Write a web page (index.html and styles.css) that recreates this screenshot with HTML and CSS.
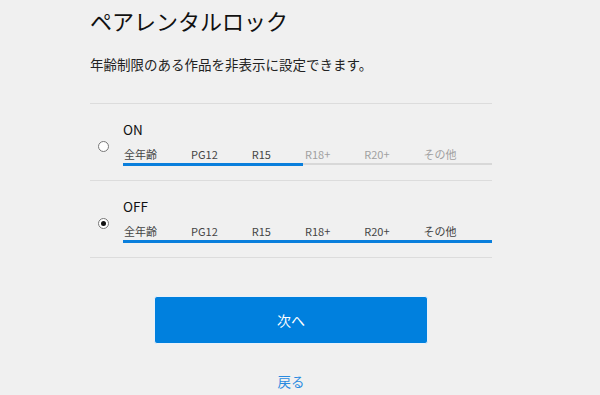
FILE: index.html
```html
<!DOCTYPE html>
<html lang="ja">
<head>
<meta charset="utf-8">
<title>ペアレンタルロック</title>
<link rel="stylesheet" href="styles.css">
</head>
<body>
<main class="page">
  <h1 class="title">ペアレンタルロック</h1>
  <p class="lead">年齢制限のある作品を非表示に設定できます。</p>
  <div class="options">
    <div class="option">
      <span class="radio"></span>
      <div class="body">
        <div class="name">ON</div>
        <div class="ratings">
          <span class="on">全年齢</span><span class="on">PG12</span><span class="on">R15</span><span>R18+</span><span>R20+</span><span>その他</span>
        </div>
        <div class="track"><div class="fill" style="width:180px"></div></div>
      </div>
    </div>
    <div class="option">
      <span class="radio checked"></span>
      <div class="body">
        <div class="name">OFF</div>
        <div class="ratings">
          <span class="on">全年齢</span><span class="on">PG12</span><span class="on">R15</span><span class="on">R18+</span><span class="on">R20+</span><span class="on">その他</span>
        </div>
        <div class="track"><div class="fill" style="width:100%"></div></div>
      </div>
    </div>
  </div>
  <div class="actions">
    <button class="next">次へ</button>
    <a class="back" href="#">戻る</a>
  </div>
</main>
</body>
</html>
```
FILE: styles.css
```css
html, body {
  margin: 0;
  padding: 0;
  background: #f0f0f0;
}
body {
  font-family: "Noto Sans CJK JP", "Noto Sans", sans-serif;
  color: #222;
}
.page {
  width: 402px;
  margin-left: 90px;
  padding-top: 4px;
}
.title {
  margin: 0;
  font-size: 22px;
  font-weight: 400;
  line-height: 32px;
  color: #111;
}
.lead {
  margin: 18px 0 0;
  font-size: 13.5px;
  line-height: 20px;
  color: #222;
}
.options {
  margin-top: 29px;
  border-top: 1px solid #dcdcdc;
}
.option {
  display: flex;
  align-items: center;
  height: 76px;
  border-bottom: 1px solid #dcdcdc;
}
.radio {
  width: 9px;
  height: 9px;
  border: 1px solid #777;
  border-radius: 50%;
  background: #fff;
  margin-left: 8px;
  margin-right: 14px;
  margin-top: 8px;
  position: relative;
  flex: none;
}
.radio.checked::after {
  content: "";
  position: absolute;
  left: 2px;
  top: 2px;
  width: 5px;
  height: 5px;
  border-radius: 50%;
  background: #111;
}
.body {
  flex: 1;
  padding-top: 0;
}
.name {
  font-size: 13.5px;
  line-height: 18px;
  color: #111;
}
.ratings {
  display: flex;
  gap: 34px;
  margin-top: 8px;
  font-size: 11px;
  line-height: 16px;
  color: #a0a0a0;
  padding-left: 1px;
}
.ratings .on {
  color: #444;
}
.track {
  margin-top: 2px;
  height: 2px;
  background: #d8d8d8;
  position: relative;
}
.fill {
  height: 3px;
  margin-top: -1px;
  background: #0a7fdc;
}
.actions {
  display: flex;
  flex-direction: column;
  align-items: center;
  padding-top: 38px;
}
.next {
  width: 274px;
  height: 48px;
  border: 1px solid #e8f1fb;
  border-radius: 3px;
  background: #0080de;
  color: #fff;
  font-family: inherit;
  font-size: 14px;
}
.back {
  margin-top: 27px;
  font-size: 13.5px;
  line-height: 20px;
  color: #2a8be0;
  text-decoration: none;
}
```
